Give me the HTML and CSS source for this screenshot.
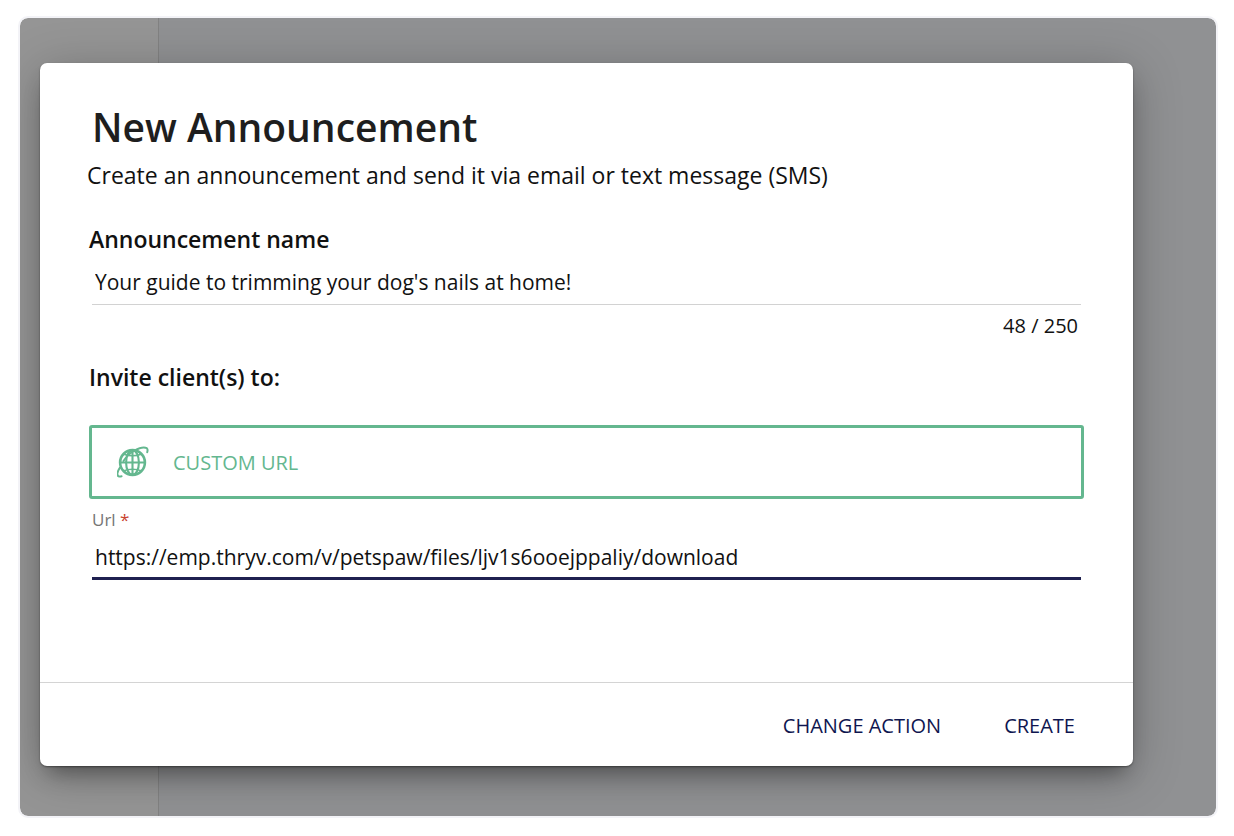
FILE: index.html
```html
<!DOCTYPE html>
<html lang="en">
<head>
  <meta charset="UTF-8">
  <meta name="viewport" content="width=device-width, initial-scale=1.0">
  <title>New Announcement</title>
  <link rel="stylesheet" href="styles.css">
</head>
<body>
  <div class="screen">
    <form class="modal" role="dialog" aria-labelledby="modal-title">
      <div class="modal-body">
        <h1 class="title" id="modal-title">New Announcement</h1>
        <p class="subtitle">Create an announcement and send it via email or text message (SMS)</p>

        <!-- Announcement name -->
        <label class="heading" for="name">Announcement name</label>
        <input class="field" id="name" type="text" maxlength="250" value="Your guide to trimming your dog's nails at home!">
        <div class="counter">48 / 250</div>

        <!-- Action -->
        <h2 class="heading invite">Invite client(s) to:</h2>
        <button class="action" type="button">
          <svg class="globe" viewBox="0 0 32 32" fill="none" stroke="currentColor" stroke-width="2.6" stroke-linecap="round" aria-hidden="true">
            <circle cx="15.5" cy="16.5" r="12.4"/>
            <ellipse cx="15.5" cy="16.500" rx="6.400" ry="12.400" stroke-width="2.100"/>
            <path d="M15.500 4.100v24.800M3.100 16.500h24.800" stroke-width="2.100"/>
            <path d="M7 8.200c4.500 2 12.500 2 17 0M7 24.800c4.500-2 12.500-2 17 0" stroke-width="1.500"/>
            <path d="M3 21.500C.4 25.500-.2 29 1.400 30.100c.8.500 2 .4 3.200.1M6.500 15C9 11 13 7 17.500 4.500 22.500 1.800 27.500.9 29.800 2.200c1 .8.900 2.400.4 4" stroke-width="2"/>
          </svg>
          CUSTOM URL
        </button>

        <label class="url-label" for="url">Url <span class="required">*</span></label>
        <input class="field focused" id="url" type="text" required value="https://emp.thryv.com/v/petspaw/files/ljv1s6ooejppaliy/download">
      </div>

      <div class="modal-footer">
        <button class="btn" type="button">CHANGE ACTION</button>
        <button class="btn" type="submit">CREATE</button>
      </div>
    </form>
  </div>
</body>
</html>
```
FILE: styles.css
```css
* {
  box-sizing: border-box;
}
body {
  margin: 0;
  padding: 16px;
  padding-left: 18px;
  background-color: #fff;
  font-family: "Open Sans", sans-serif;
  color: #111;
}
.screen {
  padding: 45px 83px 50px 20px;
  border: 2px solid #f3f3f7;
  border-radius: 10px;
  overflow: hidden;
  /* dimmed sidebar and its divider */
  background: linear-gradient(to right, #959595 138px, #828282 138px, #828282 139px, #909193 139px) padding-box;
}
.modal {
  background-color: #fff;
  border-radius: 7px;
  box-shadow: 0 14px 20px -8px rgba(0, 0, 0, 0.35), 0 8px 48px rgba(0, 0, 0, 0.25), 0 1px 2px rgba(0, 0, 0, 0.4);
}
.modal-body {
  padding: 40px 49px 102px;
}
.title {
  margin: 0 3px;
  font-size: 39px;
  line-height: 48px;
  font-weight: 600;
  color: #1e1e1e;
}
.subtitle {
  margin: 8px 0 32px -2px;
  font-size: 23px;
  line-height: 32px;
}
.heading {
  display: block;
  margin: 0;
  font-size: 23px;
  line-height: 32px;
  font-weight: 600;
}
.field {
  display: block;
  width: calc(100% - 6px);
  height: 50px;
  margin: 0 3px;
  padding: 4px 3px 0;
  border: none;
  border-bottom: 1px solid #d2d2d2;
  background: none;
  font-family: inherit;
  font-size: 21px;
  color: #111;
  outline: none;
}
.field.focused {
  height: 48px;
  border-bottom: 3px solid #1f2050;
}
.counter {
  margin: 7px 6px 0;
  font-size: 20px;
  line-height: 28px;
  text-align: right;
}
.invite {
  margin: 21px 0 32px;
}
.action {
  display: flex;
  align-items: center;
  gap: 24px;
  width: 100%;
  height: 74px;
  padding: 0 25px;
  border: 3px solid #64b78f;
  border-radius: 3px;
  background: #fff;
  font-family: inherit;
  font-size: 20px;
  color: #64b78f;
  cursor: pointer;
}
.globe {
  width: 32px;
  height: 32px;
}
.url-label {
  display: block;
  margin: 9px 3px 0;
  font-size: 17px;
  line-height: 24px;
  color: #757575;
}
.required {
  color: #c9432f;
}
.modal-footer {
  display: flex;
  justify-content: flex-end;
  gap: 31px;
  padding: 18px 42px 17px;
  border-top: 1px solid #d4d4d4;
}
.btn {
  height: 48px;
  padding: 0 16px;
  border: none;
  background: none;
  font-family: inherit;
  font-size: 20px;
  font-weight: 500;
  color: #0f1650;
  cursor: pointer;
}
```
